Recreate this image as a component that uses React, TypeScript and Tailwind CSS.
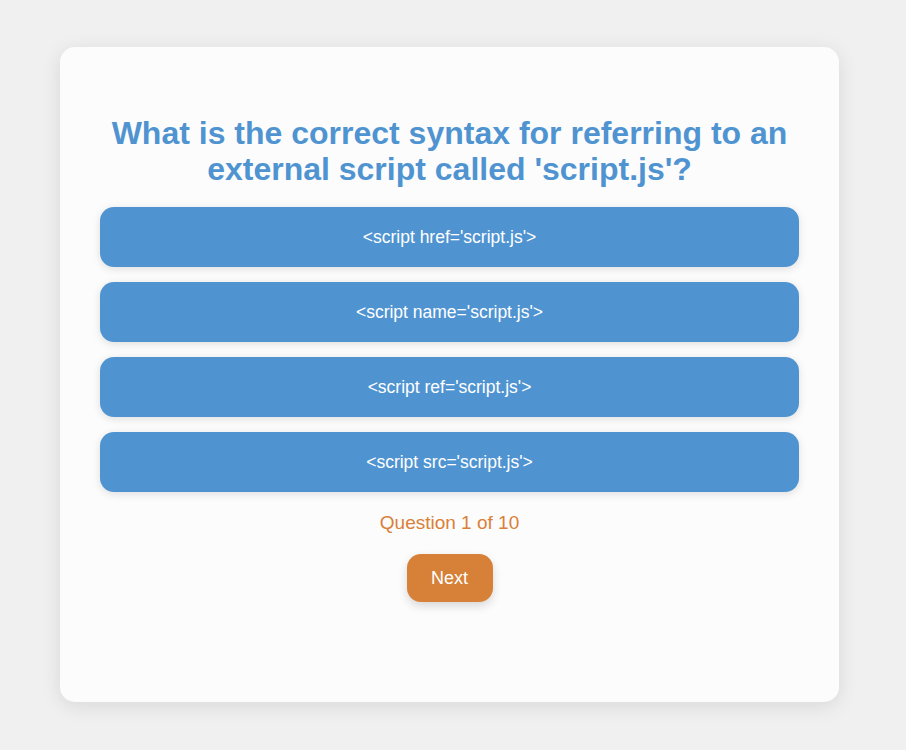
const options = [
  "<script href='script.js'>",
  "<script name='script.js'>",
  "<script ref='script.js'>",
  "<script src='script.js'>",
];

const App = () => {
  return (
    <div className="flex h-[750px] w-full items-start bg-[#f0f0f0] pt-[47px] pl-[60px] font-['Liberation_Sans',Arial,sans-serif]">
      <section className="flex h-[655px] w-[779px] flex-col items-center rounded-[15px] bg-[#fcfcfc] px-10 pt-[68px] shadow-[0_4px_20px_rgba(0,0,0,0.1)]">
        <h1 className="text-center text-[32px] leading-[36px] font-bold text-[#4f94d1]">
          What is the correct syntax for referring to an external script
          called 'script.js'?
        </h1>

        <ul className="mt-[20px] flex w-full flex-col gap-[15px]">
          {options.map((opt) => (
            <li key={opt}>
              <button className="flex h-[60px] w-full items-center justify-center rounded-[14px] bg-[#4f94d1] text-[17.5px] text-white shadow-[0_2px_8px_rgba(0,0,0,0.12)]">
                {opt}
              </button>
            </li>
          ))}
        </ul>

        <p className="mt-[20px] text-[19px] leading-[22px] text-[#d9803a]">
          Question 1 of 10
        </p>

        <button className="mt-[20px] h-[48px] w-[86px] rounded-[14px] bg-[#d68038] text-[18px] text-white shadow-[0_4px_10px_rgba(0,0,0,0.15)]">
          Next
        </button>
      </section>
    </div>
  );
};

export default App;
